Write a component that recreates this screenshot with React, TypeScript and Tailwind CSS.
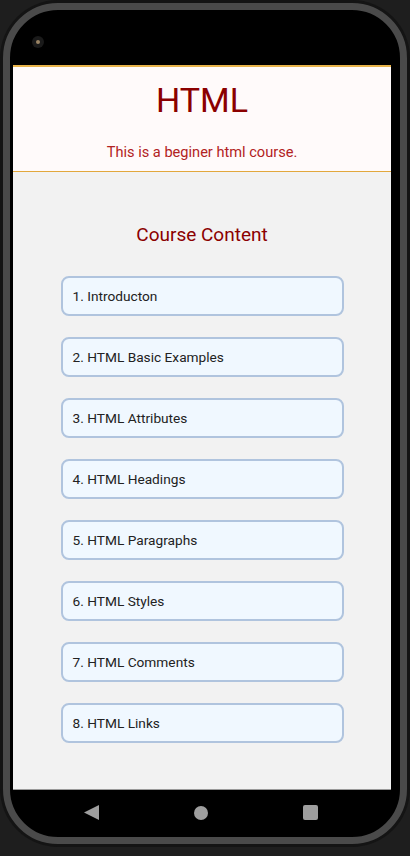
import React from "react";

const items = [
  "1. Introducton",
  "2. HTML Basic Examples",
  "3. HTML Attributes",
  "4. HTML Headings",
  "5. HTML Paragraphs",
  "6. HTML Styles",
  "7. HTML Comments",
  "8. HTML Links",
];

export default function App() {
  return (
    <div
      className="w-[410px] h-[856px] bg-[#1e1e1e] overflow-hidden"
      style={{ fontFamily: "Roboto, 'Noto Sans', sans-serif" }}
    >
      <div className="w-[410px] h-[847px] rounded-[58px] bg-[#141414] p-[3px]">
        <div className="h-full rounded-[55px] border-[7px] border-[#4a4a4a] bg-black pl-[3px] pr-[9px] flex flex-col overflow-hidden">
          {/* top bezel */}
          <div className="h-[55px] shrink-0">
            <div className="ml-[19px] mt-[26px] w-[12px] h-[12px] rounded-full bg-[#1a1a1a] flex items-center justify-center">
              <div className="w-[4px] h-[4px] rounded-full bg-[#9a8464]" />
            </div>
          </div>
          {/* screen */}
          <div className="h-[725px] shrink-0 bg-[#f2f2f2] flex flex-col border-b border-[#9a9a9a]">
            <div className="bg-[#fffafa] border-t-2 border-t-[#e8b34a] pt-[13px] flex flex-col items-center">
              <div className="text-[34px] leading-[40px] text-[#8b0000]">HTML</div>
              <div className="mt-[22px] mb-[9px] text-[14.6px] leading-[20px] text-[#b22222]">
                This is a beginer html course.
              </div>
              <div className="h-[1px] w-full bg-[#e2a83c]" />
            </div>
            <div className="flex flex-col items-center">
              <div className="mt-[49px] text-[19px] leading-[28px] text-[#8b0000]">
                Course Content
              </div>
              <div className="mt-[27px] w-[283px] flex flex-col gap-[21px]">
                {items.map((t) => (
                  <div
                    key={t}
                    className="h-[40px] rounded-[8px] border-2 border-[#b0c4de] bg-[#f0f8ff] pl-[10px] flex items-center text-[13.7px] text-[#222222]"
                  >
                    {t}
                  </div>
                ))}
              </div>
            </div>
          </div>
          {/* nav bar */}
          <div className="flex-1 flex items-center pl-[71px] gap-[95px] pb-[2px]">
            <svg width="15" height="15" viewBox="0 0 15 15">
              <polygon points="15,0 15,15 0,7.5" fill="#9e9e9e" />
            </svg>
            <div className="w-[14px] h-[14px] rounded-full bg-[#9e9e9e]" />
            <div className="w-[15px] h-[15px] rounded-[2px] bg-[#9e9e9e]" />
          </div>
        </div>
      </div>
    </div>
  );
}
